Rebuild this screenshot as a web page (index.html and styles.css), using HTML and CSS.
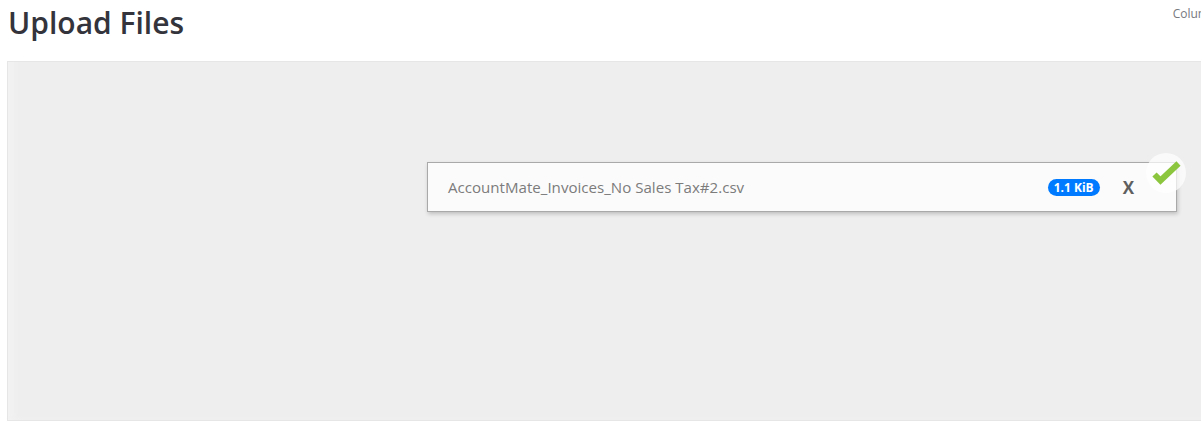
FILE: index.html
```html
<!DOCTYPE html>
<html lang="en">
<head>
    <meta charset="UTF-8">
    <meta name="viewport" content="width=device-width, initial-scale=1.0">
    <title>Upload Files</title>
    <link rel="stylesheet" href="styles.css">
</head>
<body>
    <div class="page-head">
        <h1>Upload Files</h1>
        <a class="columns-link">Columns</a>
    </div>

    <div class="dropzone">
        <div class="file-row">
            <span class="file-name">AccountMate_Invoices_No Sales Tax#2.csv</span>
            <span class="file-size">1.1 KiB</span>
            <span class="file-remove">X</span>
            <span class="file-done">
                <svg width="32" height="26" viewBox="0 0 32 26">
                    <path d="M4.5 14.5 L10.5 20.5 L28.5 3.5" fill="none" stroke="#8cc63f" stroke-width="6"/>
                </svg>
            </span>
        </div>
    </div>
</body>
</html>
```

FILE: styles.css
```css
html, body {
    overflow: hidden;
}

body {
    font-family: "Open Sans", "Noto Sans", sans-serif;
    background-color: #fff;
    margin: 0;
    width: 1201px;
    height: 427px;
}

.page-head {
    display: flex;
    align-items: flex-start;
    justify-content: space-between;
    height: 61px;
    padding-left: 8px;
}

h1 {
    margin: 2px 0 0;
    font-size: 30px;
    font-weight: 600;
    line-height: 42px;
    color: #34343c;
}

.columns-link {
    flex-shrink: 0;
    margin: 5px -21px 0 0;
    font-size: 12px;
    line-height: 17px;
    color: #77797e;
}

.dropzone {
    box-sizing: border-box;
    width: 1210px;
    height: 360px;
    margin-left: 7px;
    padding: 100px 0 0 419px;
    background-color: #eeeeee;
    border: 1px solid #e6e6e6;
    box-shadow: inset 10px -3px 6px -4px #f2f2f2;
}

.file-row {
    position: relative;
    display: flex;
    align-items: center;
    box-sizing: border-box;
    width: 750px;
    height: 50px;
    padding: 0 42px 0 20px;
    background-color: #fbfbfb;
    border: 1px solid #a9a9a9;
    box-shadow: 1px 2px 4px rgba(0, 0, 0, 0.2);
}

.file-name {
    flex-grow: 1;
    font-size: 15.1px;
    color: #7c7c7c;
}

.file-size {
    width: 52px;
    padding: 1px 0;
    margin-right: 23px;
    font-size: 12px;
    font-weight: 700;
    line-height: 15px;
    text-align: center;
    color: #fff;
    background-color: #007bff;
    border-radius: 9px;
}

.file-remove {
    font-size: 17px;
    font-weight: 700;
    color: #5f5f5f;
}

.file-done {
    position: absolute;
    top: -10px;
    right: -10px;
    display: flex;
    align-items: center;
    justify-content: center;
    width: 40px;
    height: 40px;
    background-color: rgba(255, 255, 255, 0.7);
    border-radius: 50%;
}
```
